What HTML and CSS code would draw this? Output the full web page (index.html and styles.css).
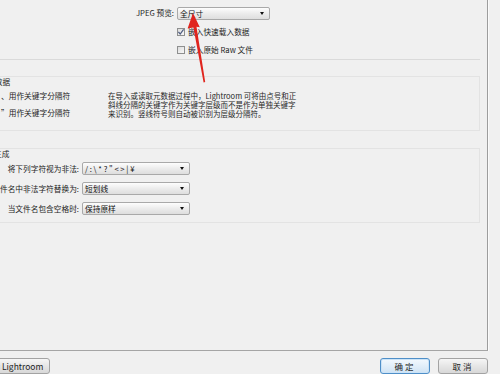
FILE: index.html
```html
<!DOCTYPE html>
<html lang="zh-CN">
<head>
  <meta charset="UTF-8" />
  <title>首选项</title>
  <link rel="stylesheet" href="styles.css">
</head>
<body>

<div class="window">
  <div class="panel">

    <!-- JPEG preview -->
    <div class="jpeg">
      <div class="row row-top">
        <span class="lbl lbl-top">JPEG 预览:</span>
        <div class="select select-top"><span>全尺寸</span></div>
      </div>
      <div class="check-row"><span class="check"><svg width="8" height="8" viewBox="0 0 8 8"><path d="M1.4 3.8 L3.2 6 L6.6 1.3" fill="none" stroke="#4e5d80" stroke-width="1.2"/></svg></span><span>嵌入快速载入数据</span></div>
      <div class="check-row"><span class="check"></span><span>嵌入原始 Raw 文件</span></div>
    </div>

    <!-- Metadata -->
    <div class="group meta">
      <div class="group-title meta-title">元数据</div>
      <div class="meta-body">
        <div class="meta-opts">
          <div class="opt">、用作关键字分隔符</div>
          <div class="opt opt-2">”用作关键字分隔符</div>
        </div>
        <p class="desc">在导入或读取元数据过程中，Lightroom 可将由点号和正<br>斜线分隔的关键字作为关键字层级而不是作为单独关键字<br>来识别。竖线符号则自动被识别为层级分隔符。</p>
      </div>
    </div>

    <!-- File name generation -->
    <div class="group names">
      <div class="group-title names-title">文件名生成</div>
      <div class="name-row">
        <span class="lbl">将下列字符视为非法:</span>
        <div class="select"><span>/ : \ * ? " &lt; &gt; | ¥</span></div>
      </div>
      <div class="name-row">
        <span class="lbl">文件名中非法字符替换为:</span>
        <div class="select"><span>短划线</span></div>
      </div>
      <div class="name-row">
        <span class="lbl">当文件名包含空格时:</span>
        <div class="select"><span>保持原样</span></div>
      </div>
    </div>

  </div>
  <div class="edge"></div>
</div>

<div class="footer">
  <button class="btn btn-restart">重新启动 Lightroom</button>
  <div class="actions">
    <button class="btn btn-default">确定</button>
    <button class="btn">取消</button>
  </div>
</div>

<svg class="arrow" width="500" height="374" viewBox="0 0 500 374">
  <path d="M193 13 L199.8 27.2 L196.5 26.8 L205.2 82 L203.6 82.4 L193.4 27.4 L187.6 28.4 Z" fill="#e0251e"/>
</svg>

</body>
</html>
```

FILE: styles.css
```css
html, body {
  margin: 0;
  padding: 0;
}

body {
  position: relative;
  width: 500px;
  height: 374px;
  overflow: hidden;
  background: #f0f0f0;
  font-family: "Noto Sans CJK SC", "Liberation Sans", sans-serif;
  font-size: 7.7px;
  line-height: 10px;
  color: #1d1d1d;
}

.window {
  display: flex;
  height: 351px;
}

.panel {
  width: 488px;
  box-sizing: border-box;
  padding-right: 7px;
  border-right: 1px solid #9d9d9d;
  border-bottom: 1px solid #a5a5a5;
}

.edge {
  flex: 1;
  border-left: 1px solid #fbfbfb;
}

/* jpeg block */
.jpeg {
  height: 60px;
  box-sizing: border-box;
  padding-top: 6px;
  border-bottom: 1px solid #dadada;
}

.row {
  display: flex;
  align-items: center;
}

.row-top {
  height: 14px;
}

.lbl {
  display: flex;
  justify-content: flex-end;
  white-space: nowrap;
  box-sizing: border-box;
  padding-right: 3px;
}

.lbl-top {
  width: 177px;
}

.select {
  position: relative;
  box-sizing: border-box;
  height: 13px;
  line-height: 11px;
  padding-left: 2px;
  border: 1px solid #a9a9a9;
  border-radius: 2px;
  background: linear-gradient(#fdfdfd, #ececec 50%, #dedede);
  white-space: nowrap;
  color: #111;
}

.select::after {
  content: "";
  position: absolute;
  right: 5px;
  top: 4px;
  border-left: 2.5px solid transparent;
  border-right: 2.5px solid transparent;
  border-top: 3px solid #111;
}

.select-top {
  width: 93px;
}

.check-row {
  display: flex;
  align-items: center;
  height: 12px;
  margin: 6px 0 0 177px;
}

.check {
  width: 8px;
  height: 8px;
  box-sizing: border-box;
  margin-right: 3px;
  border: 1px solid #8e8f8f;
  background: linear-gradient(135deg, #dcdcdc, #f8f8f8);
  display: flex;
}

.check svg {
  margin: -1px;
}

/* groups */
.group {
  border: 1px solid #e3e3e3;
  border-left: none;
}

.group-title {
  display: inline-block;
  margin-top: -4px;
  padding-right: 3px;
  background: #f0f0f0;
  white-space: nowrap;
}

.meta {
  margin-top: 16px;
  padding-bottom: 12px;
}

.meta-title {
  text-indent: -13px;
}

.meta-body {
  display: grid;
  grid-template-columns: 108px 1fr;
  margin-top: 4px;
}

.opt {
  white-space: nowrap;
  text-indent: 1px;
}

.opt-2 {
  margin-top: 7px;
}

.desc {
  margin: 0;
  font-size: 7.5px;
  line-height: 9px;
  color: #262626;
  white-space: nowrap;
}

.names {
  margin-top: 17px;
  padding-bottom: 7px;
}

.names-title {
  text-indent: -29px;
}

.name-row {
  display: flex;
  align-items: center;
  margin-top: 7px;
}

.name-row:nth-child(2) {
  margin-top: 3px;
}

.name-row .lbl {
  width: 82px;
}

.name-row .select {
  width: 108px;
}

/* footer */
.footer {
  display: flex;
  justify-content: space-between;
  padding-top: 7px;
}

.btn {
  height: 16px;
  box-sizing: border-box;
  padding: 0 6px;
  border: 1px solid #a3a3a3;
  border-radius: 3px;
  background: linear-gradient(#f6f6f6, #e6e6e6 50%, #d8d8d8);
  font-family: "Noto Sans CJK SC", "Liberation Sans", sans-serif;
  font-size: 8.5px;
  line-height: 13px;
  color: #1d1d1d;
  white-space: nowrap;
}

.btn-restart {
  margin-left: -41px;
}

.actions {
  display: flex;
  gap: 8px;
  margin-right: 12px;
}

.actions .btn {
  width: 50px;
  letter-spacing: 2px;
}

.btn-default {
  width: 51px;
  border-color: #4f8fc8;
  background: linear-gradient(#f3f9fe, #e2eef9 50%, #cfe3f4);
  box-shadow: inset 0 0 0 1px #cbe3f7;
}

.arrow {
  position: absolute;
  left: 0;
  top: 0;
  pointer-events: none;
}
```
